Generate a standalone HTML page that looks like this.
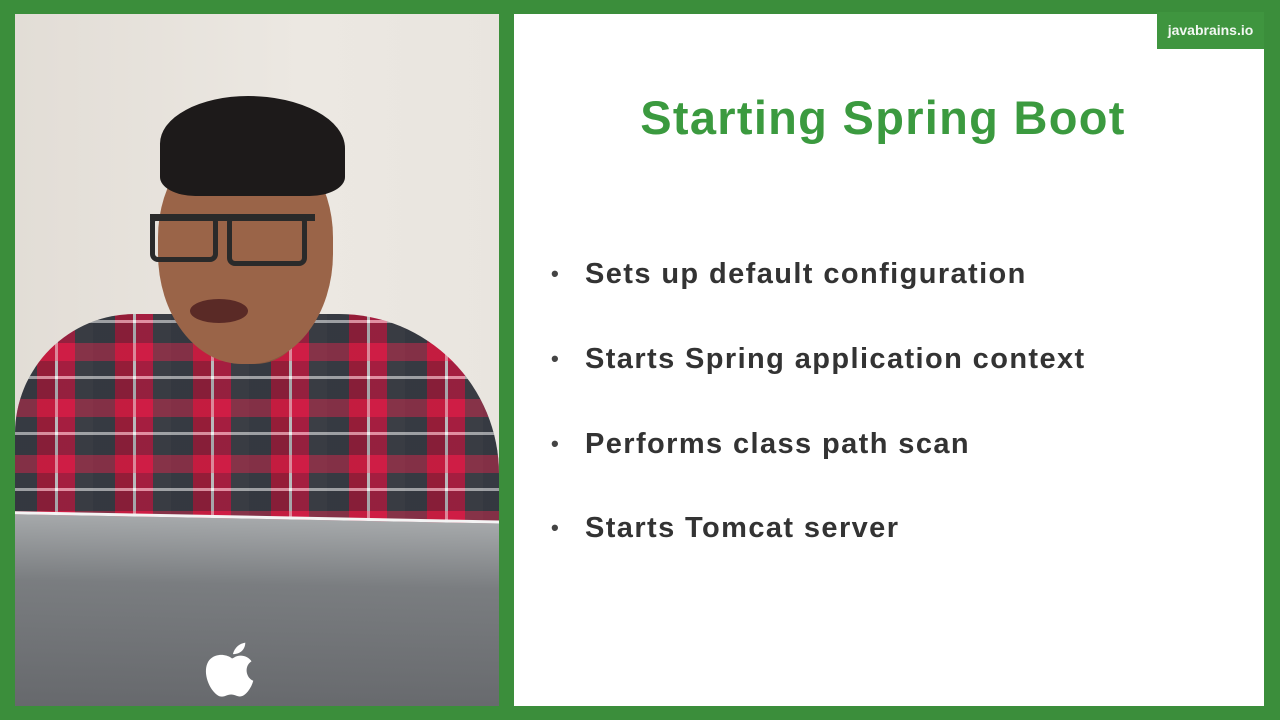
<!DOCTYPE html>
<html><head><meta charset="utf-8"><style>
body{margin:0;width:1280px;height:720px;background:#3b8e3b;position:relative;overflow:hidden;font-family:"Liberation Sans",sans-serif}
.vid{position:absolute;left:15px;top:14px;width:484px;height:692px;background:#e6e2dc;overflow:hidden}
.slide{position:absolute;left:514px;top:14px;width:750px;height:692px;background:#fff}
.logo{position:absolute;left:1157px;top:12px;width:107px;height:37px;background:#3f953f;color:#f2f7f2;font-size:14px;font-weight:bold;line-height:37px;text-align:center}
h1{position:absolute;left:0;width:750px;top:76px;margin:0;text-align:center;color:#3b9a3f;font-size:47px;font-weight:bold;letter-spacing:1.3px;padding-right:12px;box-sizing:border-box}
.b{position:absolute;left:37px;font-size:29px;font-weight:bold;color:#333;letter-spacing:1.4px}
.b:before{content:"•";position:absolute;left:0;font-size:22px;top:3px;color:#444}
.b span{margin-left:34px}
</style></head><body>
<div class="vid">
 <div style="position:absolute;left:0;top:0;width:484px;height:692px;background:linear-gradient(90deg,#e2ddd6,#ece8e2 60%,#e9e5df)"></div>
 <div style="position:absolute;left:0;top:300px;width:484px;height:215px;border-radius:120px 160px 0 0;background:repeating-linear-gradient(90deg,#3a3f46 0 22px,#b01a3a 22px 40px,#ddd 40px 43px,#c41c44 43px 60px,#40444a 60px 78px),#444"></div>
 <div style="position:absolute;left:0;top:300px;width:484px;height:215px;border-radius:120px 160px 0 0;background:repeating-linear-gradient(0deg,rgba(220,30,70,.45) 0 18px,rgba(40,40,50,.3) 18px 38px,rgba(255,255,255,.5) 38px 41px,rgba(40,40,50,.2) 41px 56px)"></div>
 <div style="position:absolute;left:180px;top:260px;width:110px;height:90px;background:#8a5a40;border-radius:0 0 50px 50px"></div>
 <div style="position:absolute;left:143px;top:120px;width:175px;height:230px;background:#9a6448;border-radius:45% 45% 48% 48%"></div>
 <div style="position:absolute;left:145px;top:82px;width:185px;height:100px;background:#1d1a1a;border-radius:50% 55% 20% 20%"></div>
 <div style="position:absolute;left:135px;top:200px;width:165px;height:50px;border-top:7px solid #2a2a2a"></div>
 <div style="position:absolute;left:135px;top:200px;width:58px;height:38px;border:5px solid #2a2a2a;border-radius:8px"></div>
 <div style="position:absolute;left:212px;top:200px;width:70px;height:42px;border:5px solid #2a2a2a;border-radius:8px"></div>
 <div style="position:absolute;left:175px;top:285px;width:58px;height:24px;background:#5a2a26;border-radius:50%"></div>
 <div style="position:absolute;left:-10px;top:497px;width:510px;height:220px;background:linear-gradient(180deg,#a6a9ab,#7a7d80 30%,#626468);border-top:3px solid #f4f4f4;transform:rotate(1.1deg);transform-origin:0 0"></div>
 <svg style="position:absolute;left:186px;top:626px" width="62" height="62" viewBox="0 0 70 70"><path d="M36 16c2-8 8-12 14-13 0 7-5 13-14 13z" fill="#fff"/><path d="M34 20c-6-4-16-5-23 1-9 8-6 26 3 37 5 6 9 7 14 5 4-2 8-2 12 0 5 2 9 0 13-5 3-4 5-8 6-12-8-3-11-16-2-22-5-7-14-8-20-4-2 1-2 1-3 0z" fill="#fff"/></svg>
</div>
<div class="slide">
 <h1>Starting Spring Boot</h1>
 <div class="b" style="top:244px"><span>Sets up default configuration</span></div>
 <div class="b" style="top:329px"><span>Starts Spring application context</span></div>
 <div class="b" style="top:414px"><span>Performs class path scan</span></div>
 <div class="b" style="top:498px"><span>Starts Tomcat server</span></div>
</div>
<div class="logo">javabrains.io</div>
</body></html>
